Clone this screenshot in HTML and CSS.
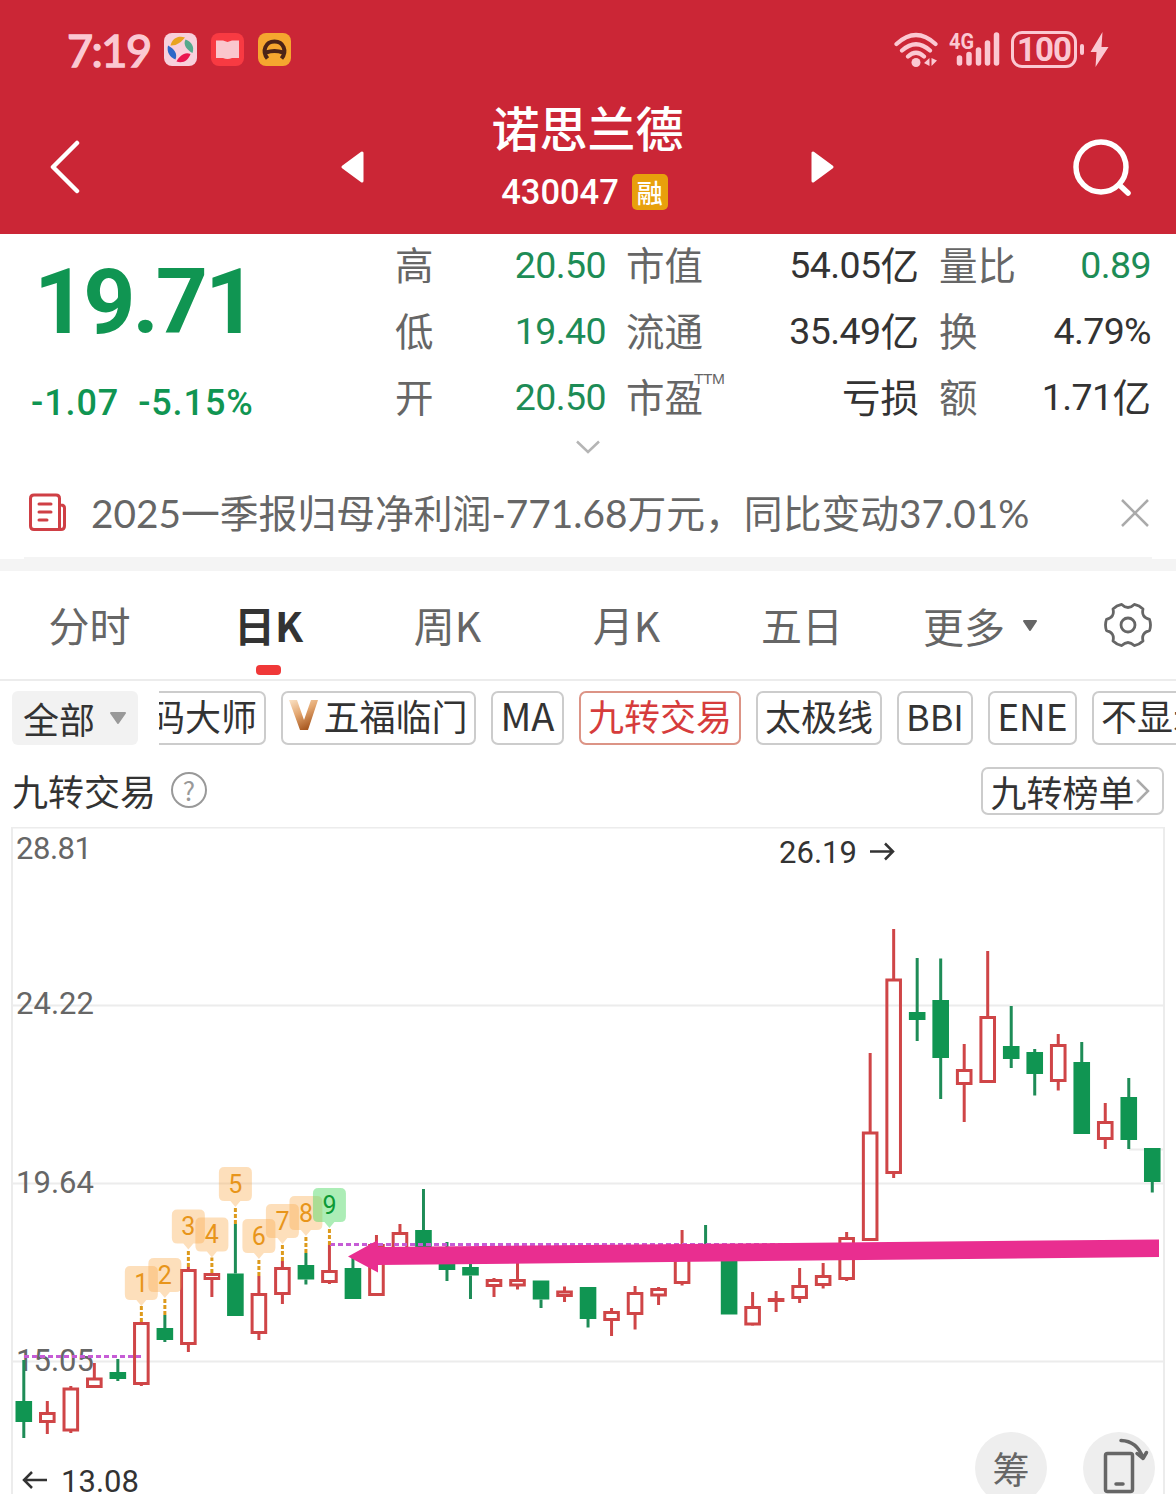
FILE: index.html
```html
<!DOCTYPE html>
<html lang="zh-CN">
<head>
    <meta charset="UTF-8">
    <meta name="viewport" content="width=device-width, initial-scale=1.0">
    <title>诺思兰德 430047</title>
    <link rel="stylesheet" href="styles.css">
</head>
<body>
    <header class="header">
        <div class="status-bar">
            <span class="time">7:19</span>
            <svg class="app-icon" width="33" height="33" viewBox="0 0 33 33">
                <rect width="33" height="33" rx="8" fill="#f8d0dc"/>
                <path d="M6.500 12.500C8.500 4.500 15 2.500 21 4.500C17.500 9 12.500 13 6.500 12.500Z" fill="#e9a421"/>
                <path d="M21.500 6.500C28 9 30.500 14 28.500 20C23.500 17.500 18.500 12 21.500 6.500Z" fill="#56a98d"/>
                <path d="M4 12.500C9.500 15.500 14 20 11.500 26.500C5.500 24 2.500 19 4 12.500Z" fill="#2e68c8"/>
                <path d="M12.500 28.500C15.500 23 20.500 18.500 26.500 21C24.500 27 19 31 12.500 28.500Z" fill="#ea1450"/>
            </svg>
            <svg class="app-icon" width="33" height="33" viewBox="0 0 33 33">
                <rect width="33" height="33" rx="8" fill="#f83a42"/>
                <path d="M5 7.500H12L16.500 9L21 7.500H28V25H21Q16.500 27 12 25H5Z" fill="#fac6cd"/>
            </svg>
            <svg class="app-icon" width="33" height="33" viewBox="0 0 33 33">
                <rect width="33" height="33" rx="8" fill="#f5a62f"/>
                <path d="M9.500 25.500C3.500 18 7.500 8.500 16.500 8.500S29.500 18 23.500 25.500M8 19.500Q16.500 16.500 25 19.500" fill="none" stroke="#4a2317" stroke-width="4"/>
            </svg>
            <div class="status-right">
                <svg width="46" height="38" viewBox="0 0 46 38" fill="none" stroke="#fbc8d2" stroke-width="4.200" stroke-linecap="round">
                    <path d="M3.500 13Q23 -5 42.500 13M9 19.500Q23 7 37 19.500M15 25.500Q23 18 31 25.500"/>
                    <circle cx="23" cy="31.500" r="4.500" fill="#fbc8d2" stroke="none"/>
                    <path d="M31 32L36.500 27V35ZM38.500 27L44 29.500L38.500 35Z" fill="#fbc8d2" stroke="none"/>
                </svg>
                <svg class="signal" width="52" height="38" viewBox="0 0 52 38">
                    <text x="0" y="18" textLength="25" lengthAdjust="spacingAndGlyphs" class="net">4G</text>
                    <path d="M10.500 27V32M20 23.500V32M29.500 19V32M38.500 12V32M47.500 4V32" stroke="#fbc8d2" stroke-width="5.500" stroke-linecap="round"/>
                </svg>
                <span class="battery">100</span>
                <svg width="30" height="38" viewBox="0 0 30 38" fill="#fbc8d2">
                    <rect x="1" y="13" width="4" height="11" rx="2"/>
                    <path d="M23.500 1L11.500 21H17.500L16.500 36L29.500 16H22.500Z"/>
                </svg>
            </div>
        </div>
        <div class="nav">
            <svg class="back" width="34" height="56" viewBox="0 0 34 56" fill="none" stroke="#fff" stroke-width="4.500" stroke-linecap="round" stroke-linejoin="round">
                <path d="M29 5L5 29L29 53"/>
            </svg>
            <svg class="prev" width="26" height="34" viewBox="0 0 26 34">
                <path d="M3 17L22 3V31Z" fill="#fff" stroke="#fff" stroke-width="3" stroke-linejoin="round"/>
            </svg>
            <div class="stock">
                <h1>诺思兰德</h1>
                <div class="code">430047<span class="margin-tag">融</span></div>
            </div>
            <svg class="next" width="26" height="34" viewBox="0 0 26 34">
                <path d="M23 17L4 3V31Z" fill="#fff" stroke="#fff" stroke-width="3" stroke-linejoin="round"/>
            </svg>
            <svg class="search" width="60" height="60" viewBox="0 0 60 60" fill="none" stroke="#fff" stroke-width="5.500" stroke-linecap="round">
                <circle cx="29" cy="29" r="25"/>
                <path d="M48 47.500L56 55"/>
            </svg>
        </div>
    </header>

    <section class="quote">
        <div class="price-box">
            <div class="price">19.71</div>
            <div class="change"><span>-1.07</span><span>-5.15%</span></div>
        </div>
        <div class="stats">
            <div class="stat"><label>高</label><b class="down">20.50</b></div>
            <div class="stat"><label>市值</label><b>54.05<i>亿</i></b></div>
            <div class="stat"><label>量比</label><b class="down">0.89</b></div>
            <div class="stat"><label>低</label><b class="down">19.40</b></div>
            <div class="stat"><label>流通</label><b>35.49<i>亿</i></b></div>
            <div class="stat"><label>换</label><b>4.79%</b></div>
            <div class="stat"><label>开</label><b class="down">20.50</b></div>
            <div class="stat"><label>市盈<sup>TTM</sup></label><b><i>亏损</i></b></div>
            <div class="stat"><label>额</label><b>1.71<i>亿</i></b></div>
        </div>
    </section>
    <div class="expand">
        <svg width="28" height="16" viewBox="0 0 28 16" fill="none" stroke="#b5b5b5" stroke-width="2.500">
            <path d="M3 2.500L14 13L25 2.500"/>
        </svg>
    </div>

    <div class="notice">
        <svg width="40" height="42" viewBox="0 0 40 42" fill="none" stroke="#cf3f45" stroke-width="3" stroke-linecap="round" stroke-linejoin="round">
            <path d="M32.500 37.500H7Q3.500 37.500 3.500 34V6.500Q3.500 3 7 3H29Q32.500 3 32.500 6.500ZM32.500 13H34Q37.500 13 37.500 16V34Q37.500 37.500 34 37.500H32.500M12 12H24M12 20H24M12 28H20"/>
        </svg>
        <p>2025一季报归母净利润-771.68万元，同比变动37.01%</p>
        <svg class="close" width="30" height="30" viewBox="0 0 30 30" stroke="#aaa" stroke-width="2.500">
            <path d="M2 2L28 28M28 2L2 28"/>
        </svg>
    </div>

    <nav class="tabs">
        <a class="tab">分时</a>
        <a class="tab active">日K</a>
        <a class="tab">周K</a>
        <a class="tab">月K</a>
        <a class="tab five">五日</a>
        <a class="more">更多
            <svg width="16" height="14" viewBox="0 0 16 14"><path d="M2 3H14L8 12Z" fill="#666" stroke="#666" stroke-width="2" stroke-linejoin="round"/></svg>
        </a>
        <svg class="gear" width="48" height="48" viewBox="0 0 48 48" fill="none" stroke="#666" stroke-width="2.800" stroke-linejoin="round">
            <path d="M45.500 18.400Q47.500 24 45.500 29.600Q37 31.500 39 40Q35.500 43.500 30.300 44.600Q24 38.500 17.700 44.600Q12.500 43.500 9 40Q11 31.500 2.500 29.600Q.5 24 2.500 18.400Q11 16.500 9 8Q12.500 4.500 17.700 3.400Q24 9.500 30.300 3.400Q35.500 4.500 39 8Q37 16.500 45.500 18.400Z"/>
            <circle cx="24" cy="24" r="7"/>
        </svg>
    </nav>

    <div class="indicators">
        <button class="all">全部
            <svg width="18" height="14" viewBox="0 0 18 14"><path d="M2 2H16L9 12Z" fill="#999" stroke="#999" stroke-width="2" stroke-linejoin="round"/></svg>
        </button>
        <div class="chips">
            <button class="chip first">筹码大师</button>
            <button class="chip wufu">
                <svg width="30" height="34" viewBox="0 0 30 34">
                    <defs>
                        <linearGradient id="gold" x1="0" y1="0" x2=".5" y2="1">
                            <stop offset="0" stop-color="#fbe3c6"/>
                            <stop offset=".5" stop-color="#e3a66f"/>
                            <stop offset="1" stop-color="#a95a22"/>
                        </linearGradient>
                    </defs>
                    <path d="M0 2H8L15 22L22 2H29L19 32H11Z" fill="url(#gold)"/>
                </svg>五福临门</button>
            <button class="chip ma">MA</button>
            <button class="chip four selected">九转交易</button>
            <button class="chip three">太极线</button>
            <button class="chip bbi">BBI</button>
            <button class="chip ene">ENE</button>
            <button class="chip last">不显示</button>
        </div>
    </div>

    <div class="chart-head">
        <span>九转交易</span>
        <span class="help">?</span>
        <button class="rank">九转榜单
            <svg width="16" height="28" viewBox="0 0 16 28" fill="none" stroke="#aaa" stroke-width="2.500"><path d="M2 3L13 14L2 25"/></svg>
        </button>
    </div>

    <div class="chart">
        <svg id="kline" width="1176" height="667" viewBox="0 827 1176 667">
            <path class="frame" d="M12 1494V827.500H1164V1494"/>
            <path class="grid" d="M12 1005.500H1164M12 1183.500H1164M12 1361.500H1164M1129 1149.500H1164"/>
            <g class="axis">
                <text x="16" y="859" textLength="76">28.81</text>
                <text x="16" y="1014" textLength="78">24.22</text>
                <text x="16" y="1193" textLength="78">19.64</text>
                <text x="16" y="1371" textLength="78">15.05</text>
            </g>
            <g id="candles"></g>
            <path class="level" d="M24 1356.500H141M330 1244.500H847"/>
            <g id="tags"></g>
            <path class="arrow" d="M348 1256.500L378 1240V1247L1159 1239.500V1257L378 1265V1272.500Z"/>
            <g class="extreme">
                <text x="779" y="863" textLength="78">26.19</text>
                <text x="61" y="1491.500" textLength="78">13.08</text>
                <path d="M870 851.500H893M885 843.500L893 851.500L885 859.500M47 1480H24M32 1472L24 1480L32 1488"/>
            </g>
        </svg>
        <div class="float-btns">
            <button>筹</button>
            <button>
                <svg width="72" height="72" viewBox="0 0 72 72" fill="none" stroke="#666" stroke-width="3.500" stroke-linejoin="round">
                    <rect x="22.500" y="21.500" width="27" height="38" rx="2"/>
                    <path d="M33 52H40M38 8.500Q54 9 60 26M54 21.500L60 26.500L63.500 20.500" stroke-linecap="round"/>
                </svg>
            </button>
        </div>
    </div>

    <script>
        // [up, high, body top, body bottom, low]
        const data = [
            [0, 1360, 1401, 1422, 1438], [1, 1401, 1412, 1423, 1434], [1, 1386, 1387.5, 1431.5, 1433],
            [1, 1363, 1377.5, 1388, 1388], [0, 1359, 1372, 1379, 1381], [1, 1322, 1322, 1385, 1386],
            [0, 1315, 1328, 1340, 1342], [1, 1267, 1269, 1345, 1352], [1, 1273, 1273, 1280, 1297],
            [0, 1224, 1273.5, 1316, 1316], [1, 1276, 1293, 1334, 1340], [1, 1261, 1267, 1295, 1304],
            [0, 1253, 1265, 1279.5, 1284.5], [1, 1245, 1270, 1283, 1284], [0, 1256, 1268, 1299, 1299],
            [1, 1235, 1244, 1296, 1296], [1, 1224, 1232, 1256, 1256], [0, 1189, 1230, 1256, 1256],
            [0, 1242, 1260, 1270, 1281], [0, 1258, 1267, 1275.5, 1299], [1, 1278, 1279, 1287, 1297],
            [1, 1262, 1279, 1286.5, 1289.5], [0, 1280.5, 1280.5, 1299.5, 1308], [1, 1286.5, 1290.5, 1297, 1302],
            [0, 1287, 1287, 1319, 1327.5], [1, 1308, 1311, 1321, 1336], [1, 1286, 1292, 1315, 1329.5],
            [1, 1287, 1288, 1296.5, 1305], [1, 1230, 1250, 1284, 1285.5], [0, 1225, 1250, 1258, 1260],
            [0, 1250, 1250, 1314.5, 1314.5], [1, 1292, 1306, 1325.5, 1325.5], [1, 1291, 1298, 1302, 1312],
            [1, 1268, 1285, 1299, 1303], [1, 1263, 1275, 1286, 1288.5], [1, 1232, 1237, 1280, 1281],
            [1, 1053, 1131.5, 1241, 1241], [1, 929, 978.5, 1174, 1178], [0, 958, 1012, 1020, 1041],
            [0, 958.5, 1000, 1058, 1099], [1, 1044, 1069, 1085, 1122], [1, 951, 1016, 1083, 1083],
            [0, 1006, 1046, 1059, 1068], [0, 1049, 1052, 1074, 1095.5], [1, 1034, 1044, 1082, 1090.5],
            [0, 1042, 1062, 1134, 1134], [1, 1103, 1121, 1140, 1149], [0, 1078, 1097, 1140, 1149],
            [0, 1148, 1148, 1182, 1192.5]
        ];
        const tagTops = [1266, 1258, 1209.5, 1217.5, 1167, 1219, 1204, 1196, 1188];
        const x = i => 23.8 + 23.51 * i;

        document.getElementById('candles').innerHTML = data.map(([up, high, top, bottom, low], i) => {
            const cx = x(i);
            const inset = up ? 1.5 : 0;
            return `<g class="${up ? 'up' : 'fall'}">
                <path d="M${cx} ${high}V${top + inset}M${cx} ${bottom - inset}V${low}"/>
                <rect x="${cx - 8.3 + inset}" y="${top + inset}" width="${16.6 - inset * 2}" height="${bottom - top - inset * 2}"/>
            </g>`;
        }).join('');

        // count tags start on the sixth candle
        document.getElementById('tags').innerHTML = tagTops.map((top, i) => {
            const cx = x(i + 5);
            return `<g class="tag${i === 8 ? ' done' : ''}">
                <path class="lead" d="M${cx} ${data[i + 5][1]}V${top + 40}"/>
                <path d="M${cx - 11} ${top}h22q5.500 0 5.500 5.500v23q0 5.500 -5.500 5.500h-6l-5 6l-5 -6h-6q-5.500 0 -5.500 -5.500v-23q0 -5.500 5.500 -5.500z"/>
                <text x="${cx}" y="${top + 25.5}">${i + 1}</text>
            </g>`;
        }).join('');
    </script>
</body>
</html>
```

FILE: styles.css
```css
* {
    box-sizing: border-box;
}
body {
    margin: 0;
    width: 1176px;
    height: 1494px;
    overflow: hidden;
    background: #fff;
    color: #333;
    font-family: Lato, "Noto Sans CJK SC", sans-serif;
}
svg {
    display: block;
    flex: none;
}
button {
    padding: 0;
    border: none;
    background: none;
    color: #333;
    font-family: "Noto Sans CJK SC", sans-serif;
    white-space: nowrap;
}
.header {
    height: 234px;
    background: #cb2636;
    color: #fff;
}
.status-bar {
    display: flex;
    align-items: center;
    height: 99px;
    padding: 0 67px 0 67px;
    color: #fbc8d2;
}
.time {
    width: 97px;
    font-size: 45px;
    font-weight: 400;
    letter-spacing: -1.500px;
    -webkit-text-stroke: 1.500px #fbc8d2;
}
.app-icon {
    margin-right: 14px;
}
.status-right {
    display: flex;
    align-items: center;
    margin-left: auto;
}
.signal {
    margin: 0 10px 0 10px;
}
.net {
    font: 700 22px Roboto, sans-serif;
    fill: #fbc8d2;
}
.battery {
    width: 66px;
    height: 37px;
    margin-right: 2px;
    border: 3px solid #fbc8d2;
    border-radius: 11px;
    font: 700 33px/32px Roboto, sans-serif;
    text-align: center;
    letter-spacing: -1px;
}
.nav {
    display: flex;
    height: 135px;
    padding: 0 44px 0 48px;
}
.back {
    margin-top: 39px;
}
.prev {
    margin: 51px 0 0 258px;
}
.stock {
    width: 443px;
    text-align: center;
}
.stock h1 {
    margin: 3px 0 0;
    font-size: 48px;
    font-weight: 500;
    line-height: 54px;
}
.code {
    display: flex;
    align-items: center;
    justify-content: center;
    height: 36px;
    margin-top: 18px;
    padding-right: 6px;
    font: 500 34.500px/38px Roboto, sans-serif;
}
.margin-tag {
    width: 36px;
    height: 36px;
    margin-left: 13px;
    border-radius: 5px;
    background: #e8a00c;
    font: 500 26px/35px "Noto Sans CJK SC", sans-serif;
}
.next {
    margin: 51px 0 0 0;
}
.search {
    margin: 39px 0 0 auto;
}
.quote {
    display: flex;
    height: 196px;
}
.price-box {
    width: 395px;
    padding-left: 34px;
    color: #109552;
    font-family: Roboto, sans-serif;
}
.price {
    margin-top: 22px;
    font-size: 91px;
    font-weight: 700;
    line-height: 92px;
    letter-spacing: -3px;
}
.change {
    display: flex;
    gap: 19px;
    margin: 33px 0 0 -3px;
    font-size: 36px;
    font-weight: 500;
    line-height: 44px;
    letter-spacing: .9px;
}
.stats {
    display: grid;
    grid-template-columns: 211px 293px 212px;
    grid-auto-rows: 66px;
    column-gap: 20px;
    margin-top: -2px;
}
.stat {
    display: flex;
    align-items: center;
    justify-content: space-between;
}
.stat label {
    position: relative;
    color: #666;
    font: 38.500px/62px "Noto Sans CJK SC", sans-serif;
    margin-bottom: 4px;
}
.stat sup {
    position: absolute;
    top: 5px;
    left: 68px;
    font: 15.500px/20px "Liberation Sans", sans-serif;
    letter-spacing: -.5px;
}
.stat b {
    display: flex;
    align-items: center;
    font: 400 37.500px/66px Roboto, sans-serif;
    letter-spacing: -.6px;
}
.stat i {
    margin-bottom: 4px;
    font: 400 38.500px/62px "Noto Sans CJK SC", sans-serif;
    letter-spacing: 0;
}
.stat .down {
    color: #1d8c56;
}
.expand {
    display: flex;
    justify-content: center;
    height: 45px;
    padding-top: 9px;
}
.notice {
    display: flex;
    align-items: center;
    height: 96px;
    padding: 0 26px 8px 27px;
    border-bottom: 12px solid #f4f4f4;
    background: linear-gradient(#f4f4f4, #f4f4f4) 24px 100% / 1128px 2px no-repeat;
}
.notice p {
    margin: 0 0 0 24px;
    color: #666;
    font-size: 38.800px;
    line-height: 60px;
    white-space: nowrap;
}
.close {
    margin-left: auto;
}
.tabs {
    display: flex;
    align-items: center;
    height: 110px;
    border-bottom: 2px solid #ececec;
    color: #666;
    font: 41px/106px "Noto Sans CJK SC", sans-serif;
}
.tab {
    position: relative;
    width: 179px;
    height: 108px;
    text-align: center;
}
.tab.five {
    width: 172px;
}
.tab.active {
    color: #333;
    font-weight: 700;
}
.tab.active::after {
    content: "";
    position: absolute;
    bottom: 4px;
    left: 77px;
    width: 25px;
    height: 10px;
    border-radius: 4px;
    background: #f03838;
}
.more {
    display: flex;
    align-items: center;
    gap: 17px;
    height: 108px;
    margin-left: 35px;
}
.gear {
    margin-left: auto;
    margin-right: 24px;
}
.indicators {
    display: flex;
    height: 64px;
    padding: 10px 0 0 12px;
}
.all {
    display: flex;
    align-items: center;
    justify-content: center;
    gap: 14px;
    width: 126px;
    height: 54px;
    margin-right: 21px;
    border-radius: 6px;
    background: #f2f2f2;
    font-size: 36px;
    line-height: 50px;
}
.chips {
    display: flex;
    flex: 1;
    gap: 15px;
    overflow: hidden;
}
.chip {
    display: flex;
    flex: none;
    align-items: center;
    justify-content: center;
    height: 54px;
    border: 2px solid #ccc;
    border-radius: 7px;
    font-size: 36px;
    line-height: 46px;
    padding-bottom: 6px;
}
.first {
    width: 162px;
    margin-left: -55px;
}
.wufu {
    width: 195px;
    gap: 4px;
}
.ma {
    width: 73px;
    font-size: 38px;
}
.four {
    width: 162px;
}
.three {
    width: 126px;
}
.bbi {
    width: 76px;
}
.ene {
    width: 89px;
    font-size: 37px;
}
.last {
    width: 126px;
}
.selected {
    border-color: #dc9486;
    color: #d63c3c;
}
.chart-head {
    display: flex;
    align-items: center;
    height: 82px;
    padding: 0 12px 0 12px;
    font: 36px/60px "Noto Sans CJK SC", sans-serif;
}
.help {
    width: 36px;
    height: 36px;
    margin: 0 0 10px 15px;
    border: 2px solid #999;
    border-radius: 50%;
    color: #999;
    font-size: 26px;
    line-height: 31px;
    text-align: center;
}
.chart-head > span {
    transform: translateY(9px);
}
.chart-head > span:first-child {
    margin-bottom: 11px;
}
.rank {
    display: flex;
    align-items: center;
    justify-content: center;
    width: 183px;
    height: 48px;
    margin: 10px 0 0 auto;
    border: 2px solid #ccc;
    border-radius: 7px;
    font-size: 36px;
    padding-right: 4px;
}
.chart {
    position: relative;
    height: 667px;
}
.frame,
.grid {
    fill: none;
    stroke: #ececec;
    stroke-width: 2;
}
.axis text,
.extreme text {
    fill: #666;
    font: 31px Roboto, sans-serif;
}
.extreme text {
    fill: #333;
}
.extreme path {
    fill: none;
    stroke: #333;
    stroke-width: 2.500;
}
.up path,
.up rect {
    fill: none;
    stroke: #cf4547;
    stroke-width: 3;
}
.fall path {
    stroke: #1e8c57;
    stroke-width: 3;
}
.fall rect {
    fill: #109552;
}
.level {
    fill: none;
    stroke: #c65cd6;
    stroke-width: 3;
    stroke-dasharray: 5 3;
}
.tag path {
    fill: rgba(250, 170, 75, .38);
}
.tag .lead {
    stroke: #dd9a1c;
    stroke-width: 3;
    stroke-dasharray: 4 2;
}
.tag text {
    fill: #e8951a;
    font: 25px Roboto, sans-serif;
    text-anchor: middle;
}
.tag.done path {
    fill: rgba(90, 220, 110, .5);
}
.tag.done text {
    fill: #0c9a35;
}
.arrow {
    fill: #e92e90;
}
.float-btns {
    position: absolute;
    top: 605px;
    right: 21px;
    display: flex;
    gap: 36px;
}
.float-btns button {
    width: 72px;
    height: 72px;
    border-radius: 50%;
    background: #eee;
    color: #666;
    font-size: 37px;
}
```
